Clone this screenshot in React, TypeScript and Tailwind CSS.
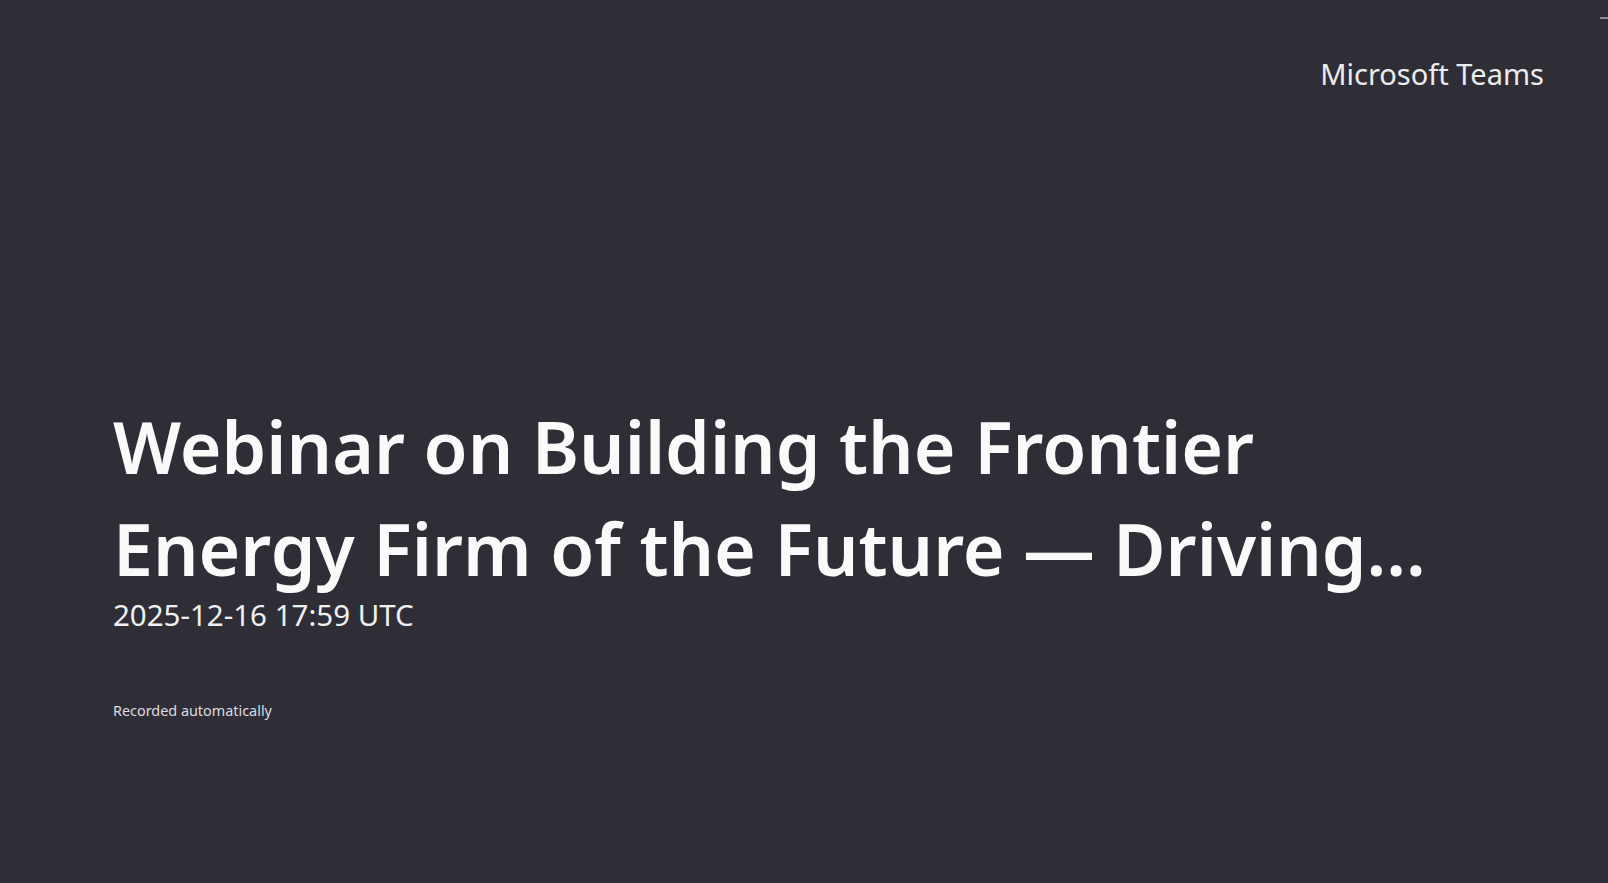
export default function App() {
  return (
    <div className="relative flex h-[883px] w-[1608px] flex-col overflow-hidden bg-[#2f2e37] font-['Noto_Sans',sans-serif] text-white">
      {/* stray scrollbar tick at the window edge */}
      <div className="absolute right-0 top-[17px] h-[2px] w-[8px] bg-[#8e8e94]" />

      <div className="flex justify-end pr-[64px] pt-[52px] text-[29px] text-[#ececee]">Microsoft Teams</div>

      <div className="mt-[300px] pl-[113px]">
        <h1 className="text-[71.5px] font-semibold leading-[102px] text-[#fafafa]">
          <span className="block">Webinar on Building the Frontier</span>
          <span className="block">Energy Firm of the Future — Driving...</span>
        </h1>
        <div className="text-[29.5px] leading-[30px] text-[#f0f0f2]">2025-12-16 17:59 UTC</div>
        <div className="mt-[70px] text-[14.4px] text-[#dcdce0]">Recorded automatically</div>
      </div>
    </div>
  );
}
